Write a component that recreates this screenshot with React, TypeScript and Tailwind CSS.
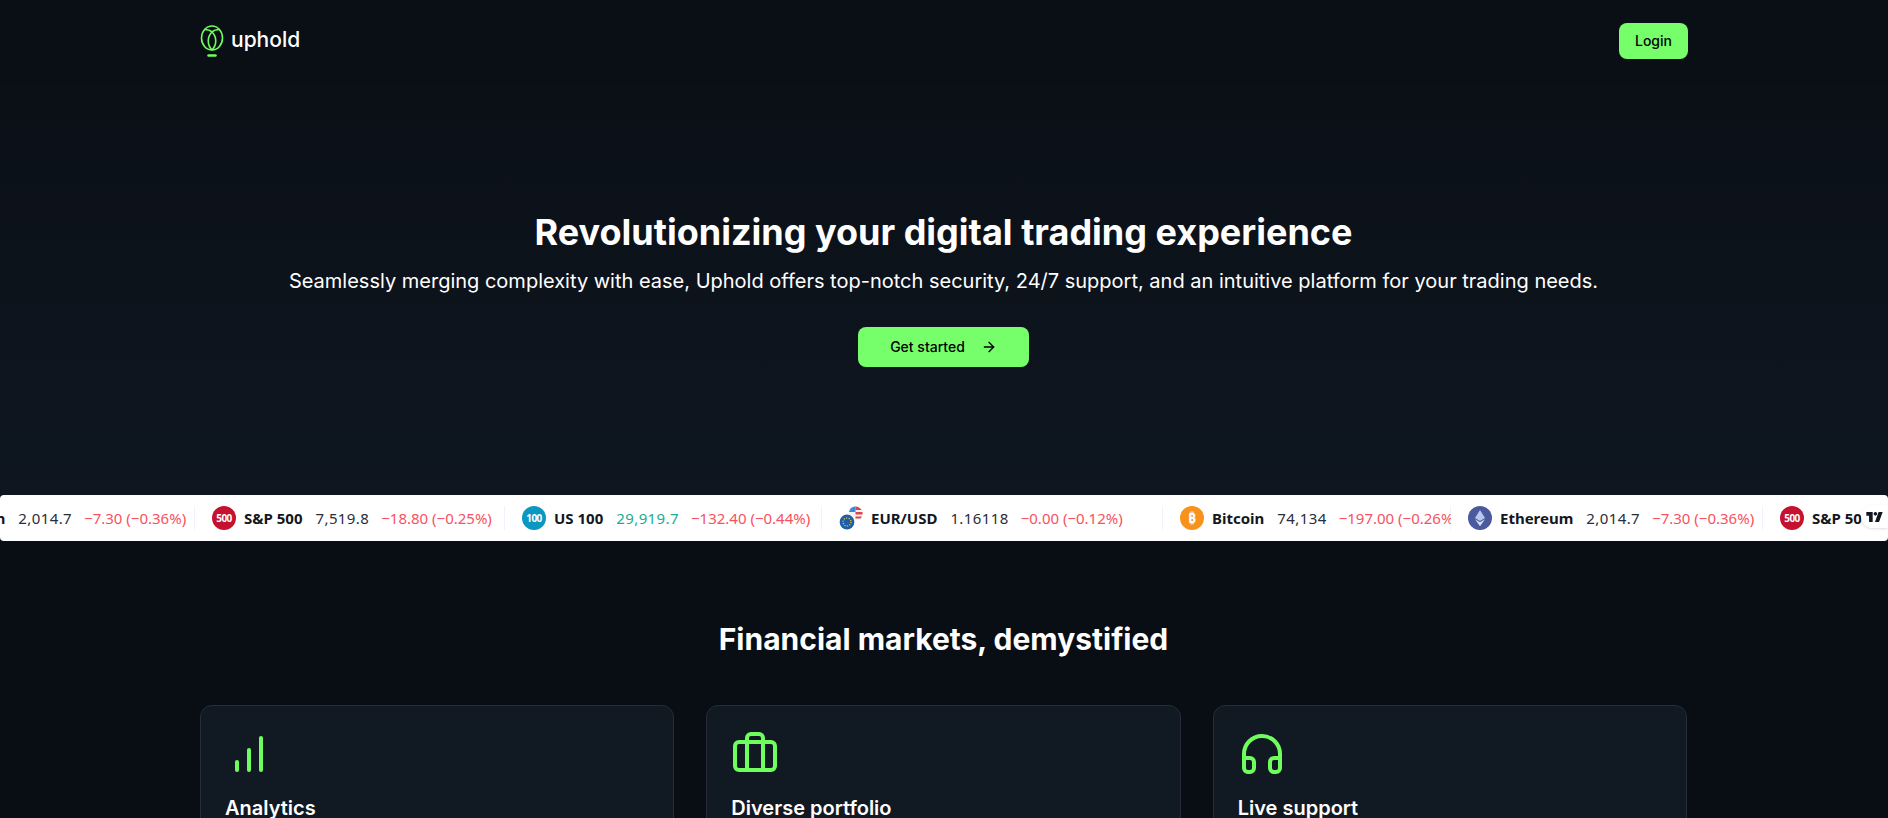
import React from 'react';
import { ArrowRight, Briefcase, Headphones } from 'lucide-react';

const ticks = [
  { name: 'Ethereum', value: '2,014.7', change: '−7.30 (−0.36%)', icon: 'eth', width: 'w-[312px]', up: false },
  { name: 'S&P 500', value: '7,519.8', change: '−18.80 (−0.25%)', icon: 'spx', width: 'w-[310px]', up: false },
  { name: 'US 100', value: '29,919.7', change: '−132.40 (−0.44%)', icon: 'ndx', width: 'w-[317px]', up: true },
  { name: 'EUR/USD', value: '1.16118', change: '−0.00 (−0.12%)', icon: 'eur', width: 'w-[341px]', up: false },
  { name: 'Bitcoin', value: '74,134', change: '−197.00 (−0.26%)', icon: 'btc', width: 'w-[288px]', up: false },
  { name: 'Ethereum', value: '2,014.7', change: '−7.30 (−0.36%)', icon: 'eth', width: 'w-[312px]', up: false },
  { name: 'S&P 500', value: '7,519.8', change: '−18.80 (−0.25%)', icon: 'spx', width: 'w-[310px]', up: false },
];

const TickIcon: React.FC<{ kind: string }> = ({ kind }) => {
  if (kind === 'spx') {
    return <div className="flex h-6 w-6 shrink-0 items-center justify-center rounded-full bg-[#c5132f] text-[10px] font-bold tracking-tighter text-white">500</div>;
  }
  if (kind === 'ndx') {
    return <div className="flex h-6 w-6 shrink-0 items-center justify-center rounded-full bg-[#0c97c3] text-[10px] font-bold tracking-tighter text-white">100</div>;
  }
  if (kind === 'btc') {
    return <div className="flex h-6 w-6 shrink-0 items-center justify-center rounded-full bg-[#f7931a] text-sm font-bold text-white">₿</div>;
  }
  if (kind === 'eth') {
    return (
      <svg viewBox="0 0 24 24" className="h-6 w-6 shrink-0">
        <circle cx="12" cy="12" r="12" fill="#4a5a9c" />
        <path d="M12 4l5 8-5 3-5-3z" fill="#b9c6ee" />
        <path d="M12 16.2l5-3-5 7-5-7z" fill="#d5ddf5" />
      </svg>
    );
  }
  return (
    <svg viewBox="0 0 24 24" className="h-6 w-6 shrink-0">
      <circle cx="16.500" cy="7.500" r="7" fill="#f2f2f2" />
      <path d="M16.500 .5a7 7 0 0 1 6 3.500h-6zM16.500 6h7v2.500h-7zM16.500 10.500h6.500a7 7 0 0 1-1.500 2h-5z" fill="#e0434b" />
      <path d="M16.500 .5a7 7 0 0 0-6.500 5.500h6.500z" fill="#3f86d8" />
      <circle cx="8" cy="16" r="8" fill="#fff" />
      <circle cx="8" cy="16" r="7.400" fill="#1f5fa8" />
      <circle cx="8" cy="16" r="4" fill="none" stroke="#e8c33a" strokeWidth="1.200" strokeDasharray="1.200 1.300" />
    </svg>
  );
};

const Ticker: React.FC = () => (
  <div className="relative h-[46px] overflow-hidden rounded bg-white font-['Noto_Sans',sans-serif] text-[15px] text-[#131722]">
    <div className="flex h-full -ml-[117px]">
      {ticks.map((t, i) => (
        <div key={i} className={`flex h-full shrink-0 items-center overflow-hidden ${t.width}`}>
          <div className="flex h-6 w-full items-center border-r border-[#f0f3fa] pl-[17px]">
            <TickIcon kind={t.icon} />
            <span className="ml-2 whitespace-nowrap font-bold">{t.name}</span>
            <span className={t.up ? 'ml-[13px] tracking-[0.4px] text-[#22ab94]' : 'ml-[13px] tracking-[0.4px] text-[#2a2e39]'}>{t.value}</span>
            <span className="ml-[12px] whitespace-nowrap text-[#f7525f]">{t.change}</span>
          </div>
        </div>
      ))}
    </div>
    <div className="absolute right-0 top-[10px] flex h-[23px] w-[27px] items-center justify-center rounded-l-xl bg-white shadow">
      <svg viewBox="0 0 36 22" className="h-[10px] w-[17px]" fill="#131722">
        <path d="M14 0H0v8h6v14h8V0zM28 22h-9L27 0h9l-8 22z" />
        <circle cx="20" cy="4" r="4" />
      </svg>
    </div>
  </div>
);

const Card: React.FC<{ title: string; icon: React.ReactNode }> = ({ title, icon }) => (
  <div className="h-[200px] rounded-xl border border-[#262d38] bg-[#111922] p-6">
    <div className="text-[#6eff5e]">{icon}</div>
    <h3 className="mt-4 text-xl font-semibold text-white">{title}</h3>
  </div>
);

const App: React.FC = () => {
  return (
    <div className="h-screen overflow-hidden bg-[#0a0e15] font-['Inter',sans-serif] text-white">
      <nav className="h-[83px]">
        <div className="ml-[200px] flex w-[1488px] items-center justify-between pt-[23px]">
          <div className="flex items-center gap-[7px]">
            <svg viewBox="0 0 24 33" className="h-[33px] w-[24px]" fill="none" stroke="#6eff5e" strokeWidth="1.600">
              <ellipse cx="12" cy="13" rx="10.500" ry="12" />
              <path d="M4.500 4.500C8 4.500 10.500 5.500 12 7c4.500 4.500 5.500 12 0 18M19.500 4.500C16 4.500 13.500 5.500 12 7c-4.500 4.500-5.500 12 0 18" />
              <path d="M8.500 30.500h7" strokeWidth="2.500" strokeLinecap="round" />
            </svg>
            <span className="pb-[2px] text-[21px] font-medium">uphold</span>
          </div>
          <button className="h-9 w-[69px] rounded-lg bg-[#76ff6a] text-sm font-medium text-black">Login</button>
        </div>
      </nav>

      <section className="flex h-[412px] flex-col items-center bg-gradient-to-b from-[#0b1017] to-[#0e1620] pr-px pt-[129px]">
        <h1 className="text-4xl font-bold">Revolutionizing your digital trading experience</h1>
        <p className="mt-[15px] text-xl">Seamlessly merging complexity with ease, Uphold offers top-notch security, 24/7 support, and an intuitive platform for your trading needs.</p>
        <button className="mt-8 flex h-10 w-[171px] items-center justify-center gap-4 rounded-lg bg-[#76ff6a] text-sm font-medium text-black">
          Get started
          <ArrowRight className="h-4 w-4" />
        </button>
      </section>

      <Ticker />

      <section className="bg-[#090d14] pt-[80px]">
        <h2 className="pr-px text-center text-3xl font-bold">Financial markets, demystified</h2>
        <div className="ml-[200px] mt-[48px] grid w-[1487px] grid-cols-3 gap-8">
          <Card
            title="Analytics"
            icon={
              <svg viewBox="0 0 24 24" width="48" height="48" fill="none" stroke="currentColor" strokeWidth="2" strokeLinecap="round">
                <path d="M12 20V10M18 20V4M6 20v-4" />
              </svg>
            }
          />
          <Card title="Diverse portfolio" icon={<Briefcase size={48} />} />
          <Card title="Live support" icon={<Headphones size={48} />} />
        </div>
      </section>
    </div>
  );
};

export default App;
